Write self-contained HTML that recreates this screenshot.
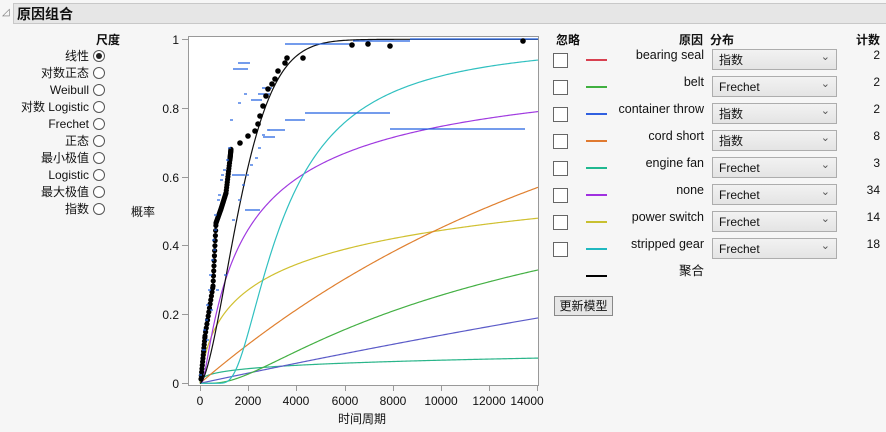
<!DOCTYPE html>
<html><head><meta charset="utf-8"><style>
body{margin:0;width:886px;height:432px;background:#f6f6f6;font-family:"Liberation Sans","Noto Sans CJK SC",sans-serif;font-size:12px;color:#111;position:relative;overflow:hidden}
.a{position:absolute;white-space:nowrap}
.hdr{left:13px;top:3px;width:873px;height:21px;background:#e6e6e6;border:1px solid #c8c8c8;border-right:none;box-sizing:border-box;font-weight:bold;font-size:14px;line-height:20px;padding-left:3px}
.rl{right:797px;text-align:right;line-height:14px;height:14px}
.rad{width:10px;height:10px;border:1px solid #555;border-radius:50%;background:#fff;left:93px}
.cb{left:553px;width:13px;height:13px;border:1px solid #666;background:#fff}
.ln{left:586px;width:21px;height:2px}
.cause{right:182px;text-align:right;font-size:12.5px;line-height:15px;height:15px}
.dd{left:712px;width:125px;height:21px;border:1px solid #adadad;background:linear-gradient(#f2f2f2,#e4e4e4);box-sizing:border-box;line-height:20px;padding-left:6px}
.dd:after{content:"⌄";position:absolute;right:6px;top:-3px;font-size:11px;color:#555}
.cnt{right:6px;text-align:right}
</style></head><body>
<div class="a" style="left:2px;top:7px;font-size:10px;color:#777">◿</div>
<div class="a hdr">原因组合</div>
<div class="a" style="left:96px;top:31px;font-weight:bold">尺度</div>
<div class="a rl" style="top:49px">线性</div><div class="a rad" style="top:50px"><div style="position:absolute;left:2px;top:2px;width:6px;height:6px;border-radius:50%;background:#222"></div></div>
<div class="a rl" style="top:66px">对数正态</div><div class="a rad" style="top:67px"></div>
<div class="a rl" style="top:83px">Weibull</div><div class="a rad" style="top:84px"></div>
<div class="a rl" style="top:100px">对数 Logistic</div><div class="a rad" style="top:101px"></div>
<div class="a rl" style="top:117px">Frechet</div><div class="a rad" style="top:118px"></div>
<div class="a rl" style="top:134px">正态</div><div class="a rad" style="top:135px"></div>
<div class="a rl" style="top:151px">最小极值</div><div class="a rad" style="top:152px"></div>
<div class="a rl" style="top:168px">Logistic</div><div class="a rad" style="top:169px"></div>
<div class="a rl" style="top:185px">最大极值</div><div class="a rad" style="top:186px"></div>
<div class="a rl" style="top:202px">指数</div><div class="a rad" style="top:203px"></div>
<div class="a" style="left:131px;top:203px">概率</div>

<svg class="a" style="left:0;top:0" width="886" height="432" font-family="Liberation Sans" font-size="12">
<rect x="188.5" y="36.5" width="350" height="349" fill="#fff" stroke="#999"/>
<g stroke="#999"><line x1="182" y1="39.5" x2="188" y2="39.5"/><line x1="182" y1="108.5" x2="188" y2="108.5"/><line x1="182" y1="177.5" x2="188" y2="177.5"/><line x1="182" y1="245.5" x2="188" y2="245.5"/><line x1="182" y1="314.5" x2="188" y2="314.5"/><line x1="182" y1="383.5" x2="188" y2="383.5"/>
<line x1="200.5" y1="386" x2="200.5" y2="391"/><line x1="248.5" y1="386" x2="248.5" y2="391"/><line x1="296.5" y1="386" x2="296.5" y2="391"/><line x1="345.5" y1="386" x2="345.5" y2="391"/><line x1="393.5" y1="386" x2="393.5" y2="391"/><line x1="441.5" y1="386" x2="441.5" y2="391"/><line x1="489.5" y1="386" x2="489.5" y2="391"/><line x1="537.5" y1="386" x2="537.5" y2="391"/></g>
<g text-anchor="end" fill="#111"><text x="179" y="44">1</text><text x="179" y="113">0.8</text><text x="179" y="182">0.6</text><text x="179" y="250">0.4</text><text x="179" y="319">0.2</text><text x="179" y="388">0</text></g>
<g text-anchor="middle" fill="#111"><text x="200" y="405">0</text><text x="248" y="405">2000</text><text x="296" y="405">4000</text><text x="345" y="405">6000</text><text x="393" y="405">8000</text><text x="441" y="405">10000</text><text x="489" y="405">12000</text><text x="527" y="405">14000</text>
<text x="362" y="423" font-family="Liberation Sans,Noto Sans CJK SC">时间周期</text></g>
<g id="curves" fill="none" stroke-width="1.2"></g>
<g fill="none" stroke-width="1.2">
<path d="M305,113H390M390,129H525M285,120H305M285,44H353M353,41H410M410,39H538M268,130H285M263,137H275M245,210H260M232,175H245M251,100H262M258,94H270M262,88H272M233,69H248M238,63H250" stroke="#2060e0"/>
</g>
<g id="pts"></g>
</svg>

<div class="a" style="left:556px;top:31px;font-weight:bold">忽略</div>
<div class="a" style="left:679px;top:31px;font-weight:bold">原因</div>
<div class="a" style="left:710px;top:31px;font-weight:bold">分布</div>
<div class="a" style="right:6px;top:31px;font-weight:bold">计数</div>

<div class="a cb" style="top:53px"></div><div class="a ln" style="top:59px;background:#d84050"></div><div class="a cause" style="top:48px">bearing seal</div><div class="a dd" style="top:49px">指数</div><div class="a cnt" style="top:48px">2</div>
<div class="a cb" style="top:80px"></div><div class="a ln" style="top:86px;background:#40b040"></div><div class="a cause" style="top:75px">belt</div><div class="a dd" style="top:76px">Frechet</div><div class="a cnt" style="top:75px">2</div>
<div class="a cb" style="top:107px"></div><div class="a ln" style="top:113px;background:#3060e0"></div><div class="a cause" style="top:102px">container throw</div><div class="a dd" style="top:103px">指数</div><div class="a cnt" style="top:102px">2</div>
<div class="a cb" style="top:134px"></div><div class="a ln" style="top:140px;background:#e07a30"></div><div class="a cause" style="top:129px">cord short</div><div class="a dd" style="top:130px">指数</div><div class="a cnt" style="top:129px">8</div>
<div class="a cb" style="top:161px"></div><div class="a ln" style="top:167px;background:#20b890"></div><div class="a cause" style="top:156px">engine fan</div><div class="a dd" style="top:157px">Frechet</div><div class="a cnt" style="top:156px">3</div>
<div class="a cb" style="top:188px"></div><div class="a ln" style="top:194px;background:#a030e0"></div><div class="a cause" style="top:183px">none</div><div class="a dd" style="top:184px">Frechet</div><div class="a cnt" style="top:183px">34</div>
<div class="a cb" style="top:215px"></div><div class="a ln" style="top:221px;background:#c8c030"></div><div class="a cause" style="top:210px">power switch</div><div class="a dd" style="top:211px">Frechet</div><div class="a cnt" style="top:210px">14</div>
<div class="a cb" style="top:242px"></div><div class="a ln" style="top:248px;background:#20b8c0"></div><div class="a cause" style="top:237px">stripped gear</div><div class="a dd" style="top:238px">Frechet</div><div class="a cnt" style="top:237px">18</div>
<div class="a ln" style="top:275px;background:#000"></div><div class="a cause" style="top:264px">聚合</div>
<div class="a" style="left:554px;top:296px;width:59px;height:20px;border:1px solid #888;background:#e6e6e6;box-sizing:border-box;text-align:center;line-height:18px">更新模型</div>

<script>
function fr(s,a){return function(t){return t<=0?0:Math.exp(-Math.pow(t/s,-a));};}
function ex(l){return function(t){return 1-Math.exp(-t/l);};}
function wb(s,k){return function(t){return t<=0?0:1-Math.exp(-Math.pow(t/s,k));};}
var C=[[fr(2.8e8,0.097),"#2ab58a"],[ex(66400),"#5b5bc8"],[fr(16630,0.607),"#44b044"],[fr(4905,0.295),"#d0c030"],[ex(16600),"#e08030"],[fr(1414,0.63),"#a03ae0"],[fr(2890,1.76),"#30c0c0"],[wb(2000,1.6),"#111"]];
var cs='';
C.forEach(function(c){var d='M200,383.3';for(var t=10;t<=14000;t+=(t<2000?10:60)){var x=200+t*338/14000,y=383.3-c[0](t)*344;d+=' L'+x.toFixed(2)+','+y.toFixed(2);}cs+='<path d="'+d+'" stroke="'+c[1]+'"/>';});
document.getElementById('curves').innerHTML=cs;
var P=[[201,379],[205,336],[213,286],[216,223],[221,209],[226,193],[230,159],[231,149]],g=document.getElementById('pts'),s='';
for(var i=0;i<P.length-1;i++){for(var t=0;t<1;t+=0.08){var x=P[i][0]+(P[i+1][0]-P[i][0])*t,y=P[i][1]+(P[i+1][1]-P[i][1])*t;s+='<circle cx="'+x+'" cy="'+y+'" r="2.6" fill="#000"/>';}}
var Q=[[240,143],[248,136],[255,131],[258,124],[260,116],[263,106],[266,96],[268,89],[272,84],[275,79],[278,71],[285,63],[287,58],[303,58],[352,45],[368,44],[390,46],[523,41]];
Q.forEach(function(p){s+='<circle cx="'+p[0]+'" cy="'+p[1]+'" r="2.8" fill="#000"/>';});
var B=[[199,375],[202,350],[205,320],[208,290],[211,260],[213,250],[214,230],[217,200],[220,180],[223,170],[226,160],[228,148],[203,330],[206,305],[209,275],[212,240],[214,215],[218,195],[221,175],[230,120],[238,103],[244,94],[203,350],[206,340],[210,310],[216,290],[224,275],[232,220],[238,200],[242,185],[246,175],[250,165],[255,158],[258,148],[262,135],[267,130]];
B.forEach(function(p){s+='<line x1="'+p[0]+'" y1="'+p[1]+'" x2="'+(p[0]+3)+'" y2="'+p[1]+'" stroke="#2060e0" stroke-width="1.2"/>';});
g.innerHTML=s;
</script>
</body></html>
